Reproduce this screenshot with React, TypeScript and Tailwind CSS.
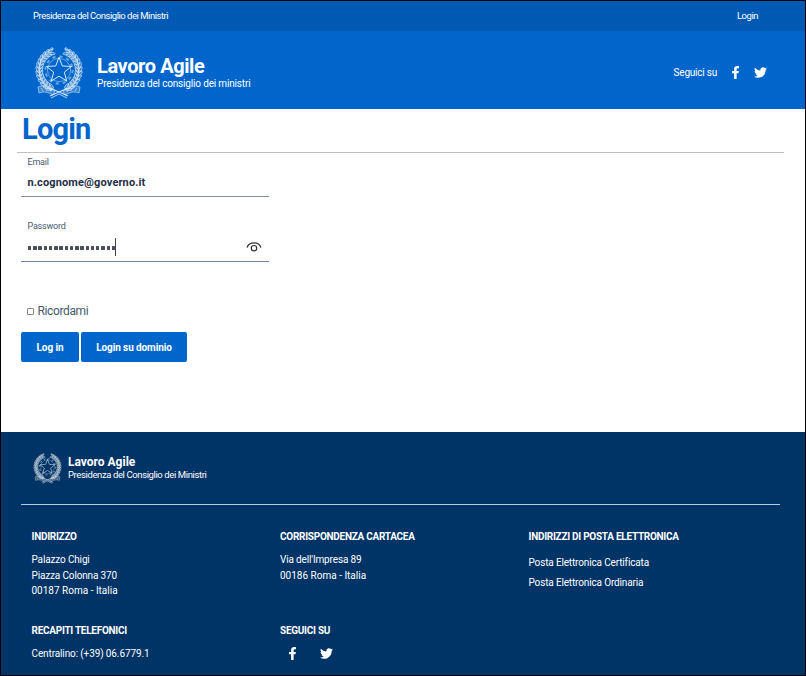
import type { ReactNode } from "react";
import { FaFacebookF, FaTwitter } from "react-icons/fa";

const LEAVES = [-152, -141, -130, -119, -108, -97, -86, -75, -64, -53, -42, -31, -20];

function star(cx: number, cy: number, outer: number, inner: number) {
  return Array.from({ length: 10 }, (_, i) => {
    const r = i % 2 === 0 ? outer : inner;
    const a = (Math.PI / 5) * i - Math.PI / 2;
    return `${(cx + r * Math.cos(a)).toFixed(2)},${(cy + r * Math.sin(a)).toFixed(2)}`;
  }).join(" ");
}

function Branch() {
  return (
    <g>
      {LEAVES.map((angle) => (
        <g
          key={angle}
          transform={`translate(24 25) rotate(${angle}) translate(0 -19.6)`}
          className="fill-white/25"
          strokeWidth="0.6"
        >
          <ellipse cx="0" cy="-2" rx="3.2" ry="1.3" transform="rotate(-28)" />
          <ellipse cx="0" cy="2" rx="3" ry="1.2" transform="rotate(24)" />
        </g>
      ))}
      <path d="M17 45C7 41 2 30 5 18C7 11 12 6 18 4" strokeWidth="0.9" />
    </g>
  );
}

function Emblem({ className }: { className: string }) {
  return (
    <svg viewBox="0 0 48 54" className={className} fill="none" stroke="currentColor" strokeWidth="0.6">
      <g opacity="0.85">
        <Branch />
        <g transform="translate(48 0) scale(-1 1)">
          <Branch />
        </g>
        <circle cx="24" cy="25" r="13.6" strokeWidth="2" strokeDasharray="3.2 3.92" opacity="0.5" />
        <circle cx="24" cy="25" r="11.6" opacity="0.8" />
        <polygon points={star(24, 25.5, 13.2, 5.6)} strokeWidth="1" />
        <path d="M3 42C7 40 12 41 16 44L20 46L18 50C13 47 9 46 4 48Z" className="fill-white/25" />
        <path d="M45 42C41 40 36 41 32 44L28 46L30 50C35 47 39 46 44 48Z" className="fill-white/25" />
        <path d="M6 43l2 3m2-4l2 4m2-3l2 4M42 43l-2 3m-2-4l-2 4m-2-3l-2 4" />
        <path d="M15 51L24 47L33 43M33 51L24 47L15 43" strokeWidth="1.1" />
        <path d="M16 53L24 49L32 53" strokeWidth="0.8" />
      </g>
    </svg>
  );
}

function Social({ className }: { className: string }) {
  return (
    <div className={`flex items-center ${className}`}>
      <FaFacebookF className="h-[13px] w-[9px]" />
      <FaTwitter className="h-[13px] w-[13px]" />
    </div>
  );
}

function FooterBlock({ title, children }: { title: string; children: ReactNode }) {
  return (
    <section className="w-[248.5px] shrink-0 whitespace-nowrap">
      <h4 className="text-[10px] leading-4 font-bold tracking-[-0.27px]">{title}</h4>
      {children}
    </section>
  );
}

export default function App() {
  return (
    <div className="flex h-[676px] w-[806px] flex-col overflow-hidden border border-black bg-white font-['Roboto',sans-serif] whitespace-nowrap">
      <div className="flex h-[30px] shrink-0 items-center justify-between bg-[#0059b3] pr-[47px] pl-8 text-[9.5px] tracking-[-0.48px] text-white">
        <span>Presidenza del Consiglio dei Ministri</span>
        <span>Login</span>
      </div>
      <header className="flex h-[78px] shrink-0 items-center bg-[#0066cc] pr-[38px] pl-[34px] text-white">
        <Emblem className="mt-[4px] h-[54px] w-12" />
        <div className="ml-[14px]">
          <div className="mt-[5px] text-[20px] leading-[22px] font-bold tracking-[-0.4px]">Lavoro Agile</div>
          <div className="text-[10px] leading-[14px] tracking-[-0.17px]">Presidenza del consiglio dei ministri</div>
        </div>
        <span className="mt-[5px] ml-auto text-[10px] tracking-[-0.22px]">Seguici su</span>
        <Social className="mt-[5px] ml-[14px] gap-[14px]" />
      </header>

      <main className="flex h-[323px] shrink-0 flex-col pl-5 text-[#455a6c]">
        <h1 className="h-[43px] pt-[2px] pl-px text-[29px] leading-9 font-bold tracking-[-0.8px] text-[#0066cc]">Login</h1>
        <hr className="-ml-1 w-[767px] border-t border-[#bfbfbf]" />
        <form className="flex flex-col">
          <div className="h-[44px] w-[248px] border-b border-[#7f8da0] pl-[6.5px]">
            <div className="pt-[3px] text-[9px] leading-[12px] tracking-[-0.2px]">Email</div>
            <div className="mt-[7px] text-[11px] leading-[16px] font-bold tracking-[0.13px] text-[#1f3047]">n.cognome@governo.it</div>
          </div>
          <div className="mt-[23px] h-[41px] w-[248px] pl-[6.5px]">
            <div className="text-[9px] leading-[12px] tracking-[-0.2px]">Password</div>
            <div className="mt-[5px] flex h-[20px] items-center">
              <div className="mt-[2px] flex gap-[1.8px] pl-[0.5px]">
                {Array.from({ length: 17 }, (_, i) => (
                  <span key={i} className="h-[4px] w-[3.45px] rounded-[0.5px] bg-[#4a4f57]" />
                ))}
              </div>
              <span className="h-[18px] w-px bg-[#444]" />
              <svg viewBox="0 0 16 12" className="mr-[7px] ml-auto h-3 w-4 fill-none stroke-[#333] stroke-[1.2]">
                <path d="M1 6.6C3.2 0.4 12.8 0.4 15 6.6" />
                <circle cx="8" cy="7.2" r="2.7" />
              </svg>
            </div>
          </div>
          <hr className="w-[248px] border-t border-[#7185a0]" />
          <label className="mt-[41px] flex h-[16px] items-center pl-[6px] text-[12px] tracking-[-0.38px]">
            <span className="mr-[3.5px] h-[7px] w-[7px] rounded-[1px] border border-[#858585]" />
            Ricordami
          </label>
          <div className="mt-[13px] flex gap-[2px] text-[10px] font-bold tracking-[-0.1px] text-white">
            <button type="button" className="h-[30px] w-[58px] rounded-[2px] bg-[#0066cc]">Log in</button>
            <button type="button" className="h-[30px] w-[106px] rounded-[2px] bg-[#0066cc]">Login su dominio</button>
          </div>
        </form>
      </main>

      <footer className="grow bg-[#003366] px-5 text-white">
        <div className="flex h-[72px] items-center pl-3">
          <Emblem className="h-8 w-[29px]" />
          <div className="ml-[6px]">
            <div className="text-[12px] leading-[13px] font-bold">Lavoro Agile</div>
            <div className="text-[9.5px] leading-[12px] tracking-[-0.39px]">Presidenza del Consiglio dei Ministri</div>
          </div>
        </div>
        <hr className="w-[759px] border-t border-[#bccbd8]" />
        <div className="mt-[24px] flex h-[94px] pl-[10.5px] text-[10px] tracking-[-0.15px]">
          <FooterBlock title="INDIRIZZO">
            <p className="mt-[7px] leading-[15.5px]">
              Palazzo Chigi<br />Piazza Colonna 370<br />
              <span className="tracking-normal">00187 Roma - Italia</span>
            </p>
          </FooterBlock>
          <FooterBlock title="CORRISPONDENZA CARTACEA">
            <p className="mt-[7px] leading-[15.5px]">
              Via dell'Impresa 89<br />
              <span className="tracking-normal">00186 Roma - Italia</span>
            </p>
          </FooterBlock>
          <FooterBlock title="INDIRIZZI DI POSTA ELETTRONICA">
            <p className="mt-[8px] leading-[20px]">Posta Elettronica Certificata<br />Posta Elettronica Ordinaria</p>
          </FooterBlock>
        </div>
        <div className="flex pl-[10.5px] text-[10px] tracking-[-0.12px]">
          <FooterBlock title="RECAPITI TELEFONICI">
            <p className="mt-[7px] leading-[15.5px]">Centralino: (+39) 06.6779.1</p>
          </FooterBlock>
          <FooterBlock title="SEGUICI SU">
            <Social className="mt-[8px] ml-2 gap-[23px]" />
          </FooterBlock>
        </div>
      </footer>
    </div>
  );
}
